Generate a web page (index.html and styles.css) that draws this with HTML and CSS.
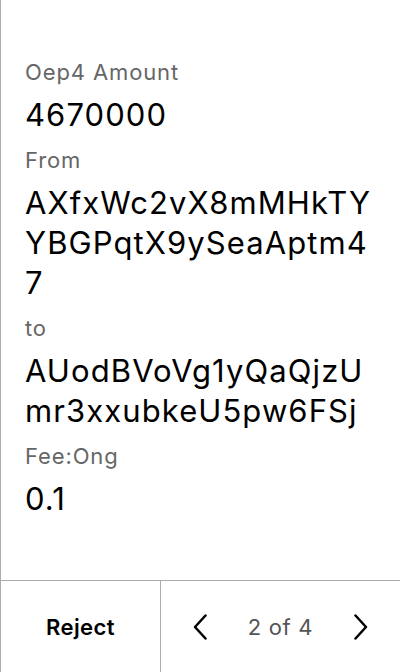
FILE: index.html
```html
<!DOCTYPE html>
<html lang="en">
<head>
<meta charset="utf-8">
<title>Transaction</title>
<link rel="stylesheet" href="styles.css">
</head>
<body>
<div class="screen">
  <main class="details">
    <div class="field">
      <div class="label">Oep4 Amount</div>
      <div class="value">4670000</div>
    </div>
    <div class="field">
      <div class="label">From</div>
      <div class="value address">AXfxWc2vX8mMHkTYYBGPqtX9ySeaAptm47</div>
    </div>
    <div class="field">
      <div class="label">to</div>
      <div class="value address">AUodBVoVg1yQaQjzUmr3xxubkeU5pw6FSj</div>
    </div>
    <div class="field">
      <div class="label">Fee:Ong</div>
      <div class="value">0.1</div>
    </div>
  </main>
  <footer class="actions">
    <button class="reject" type="button">Reject</button>
    <div class="pager">
      <button class="nav" type="button" aria-label="Previous">
        <svg width="14" height="26" viewBox="0 0 14 26"><path d="M12.5 1.5 L2 13 L12.5 24.5" fill="none" stroke="#000" stroke-width="2.5" stroke-linecap="round" stroke-linejoin="round"/></svg>
      </button>
      <span class="count">2 of 4</span>
      <button class="nav" type="button" aria-label="Next">
        <svg width="14" height="26" viewBox="0 0 14 26"><path d="M1.5 1.5 L12 13 L1.5 24.5" fill="none" stroke="#000" stroke-width="2.5" stroke-linecap="round" stroke-linejoin="round"/></svg>
      </button>
    </div>
  </footer>
</div>
</body>
</html>
```

FILE: styles.css
```css
* { box-sizing: border-box; }
html, body { margin: 0; padding: 0; background: #fff; }
body { font-family: Inter, "Liberation Sans", sans-serif; color: #000; }

.screen {
  width: 400px;
  height: 672px;
  border-left: 1px solid #acacac;
  display: flex;
  flex-direction: column;
}

.details {
  flex: 1;
  padding: 57px 24px 0 24px;
  display: flex;
  flex-direction: column;
  gap: 10px;
}

.field { display: flex; flex-direction: column; gap: 8px; }

.label {
  font-size: 22px;
  line-height: 30px;
  color: #666;
  letter-spacing: 0.04em;
}

.value {
  font-size: 31px;
  line-height: 40px;
  color: #000;
  letter-spacing: 0.035em;
}

.address { word-break: break-all; }

.actions {
  height: 92px;
  border-top: 1px solid #acacac;
  display: flex;
}

.reject {
  width: 160px;
  border: 0;
  border-right: 1px solid #acacac;
  background: transparent;
  font-family: inherit;
  font-size: 22px;
  font-weight: 600;
  color: #000;
  letter-spacing: 0.02em;
  padding: 0;
}

.pager {
  flex: 1;
  display: flex;
  align-items: center;
  justify-content: space-between;
  padding: 0 32px;
}

.nav {
  border: 0;
  background: transparent;
  padding: 0;
  display: flex;
}

.count {
  font-size: 22px;
  color: #555;
  letter-spacing: 0.03em;
}
```
